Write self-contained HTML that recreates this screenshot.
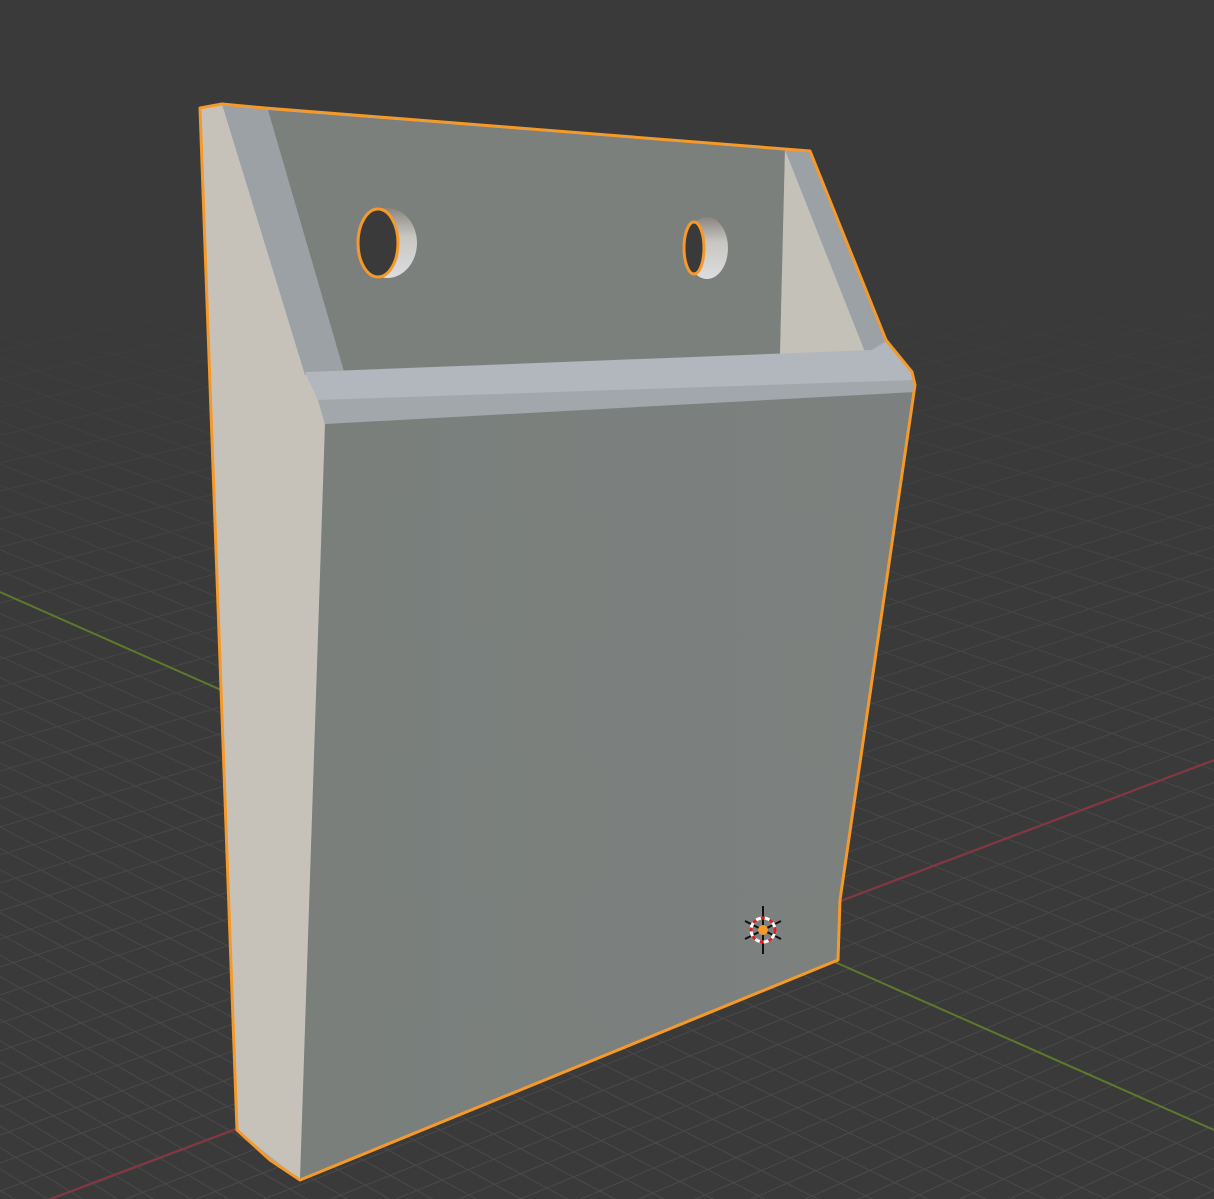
<!DOCTYPE html>
<html><head><meta charset="utf-8"><style>
html,body{margin:0;padding:0;background:#3a3a3a;width:1214px;height:1199px;overflow:hidden}
svg{display:block;position:absolute;left:0;top:0}
</style></head><body>
<svg id="s" width="1214" height="1199" viewBox="0 0 1214 1199" xmlns="http://www.w3.org/2000/svg">
<defs>
<linearGradient id="fade" x1="0" y1="0" x2="0" y2="1">
<stop offset="0" stop-color="#3a3a3a" stop-opacity="1"/>
<stop offset="0.22" stop-color="#3a3a3a" stop-opacity="1"/>
<stop offset="0.5" stop-color="#3a3a3a" stop-opacity="0.3"/>
<stop offset="1" stop-color="#3a3a3a" stop-opacity="0"/>
</linearGradient>
<linearGradient id="front" x1="0" y1="0" x2="1" y2="0">
<stop offset="0" stop-color="#7a7f7c"/><stop offset="1" stop-color="#7c817f"/>
</linearGradient>
<linearGradient id="hole" x1="0" y1="0" x2="0" y2="1">
<stop offset="0" stop-color="#8a8580"/><stop offset="0.4" stop-color="#c8c6c2"/><stop offset="1" stop-color="#dcdde0"/>
</linearGradient>
</defs>
<rect width="1214" height="1199" fill="#3a3a3a"/>
<g id="grid" stroke="#4a4a4a" stroke-width="1"></g>
<rect width="1214" height="1199" fill="url(#fade)"/>
<line x1="0" y1="592" x2="1214" y2="1130" stroke="#5d7a2a" stroke-width="2"/>
<line x1="50" y1="1199" x2="1214" y2="760" stroke="#8a3440" stroke-width="2"/>

<!-- object -->
<polygon points="200,108 222,104 265,108 810,151 886,340 912,372 915,385 840,900 838,960 300,1180 270,1160 237,1130" fill="#a6abb1"/>
<polygon points="200,108 222,104 305,372 318,400 325,424 300,1180 237,1130" fill="#c6c2ba"/>
<polygon points="222,104 268,110 345,375 305,375" fill="#9ca1a6"/>
<polygon points="268,110 785,150 780,355 345,375" fill="#7b807d"/>
<polygon points="785,150 810,152 865,352 780,355" fill="#c4c1b9"/>
<polygon points="810,152 886,340 872,350 865,352 785,150" fill="#9ca1a6"/>
<polygon points="305,372 872,350 886,342 912,372 915,385 325,410 318,400" fill="#b2b6bd"/>
<polygon points="318,400 915,380 915,392 325,425" fill="#a2a7ab"/>
<polygon points="325,424 915,392 840,900 838,960 300,1180" fill="url(#front)"/>
<polygon points="200,108 222,104 265,108 810,151 886,340 912,372 915,385 840,900 838,960 300,1180 270,1160 237,1130" fill="none" stroke="#f59a2a" stroke-width="3" stroke-linejoin="round"/>
<!-- holes -->
<ellipse cx="387" cy="243" rx="30" ry="35" fill="url(#hole)"/>
<ellipse cx="378" cy="243" rx="20" ry="34" fill="#3a3a3a" stroke="#f59a2a" stroke-width="3"/>
<ellipse cx="707" cy="248" rx="21" ry="31" fill="url(#hole)"/>
<ellipse cx="694" cy="248" rx="10" ry="26" fill="#3a3a3a" stroke="#f59a2a" stroke-width="3"/>
<!-- 3d cursor -->
<g stroke="#111" stroke-width="2">
<line x1="763" y1="906" x2="763" y2="954"/>
<line x1="745" y1="921" x2="781" y2="939"/>
<line x1="745" y1="939" x2="781" y2="921"/>
</g>
<circle cx="763" cy="930" r="12" fill="none" stroke="#fff" stroke-width="3"/>
<circle cx="763" cy="930" r="12" fill="none" stroke="#e02020" stroke-width="3" stroke-dasharray="4 5"/>
<circle cx="763" cy="930" r="5" fill="#f59a2a"/>
</svg>
<script>
(function(){
var g=document.getElementById('grid'),ns='http://www.w3.org/2000/svg';
function L(x1,y1,x2,y2){var l=document.createElementNS(ns,'line');l.setAttribute('x1',x1);l.setAttribute('y1',y1);l.setAttribute('x2',x2);l.setAttribute('y2',y2);g.appendChild(l);}
var vg=[-3000,-737],vr=[5185,-737];
for(var i=-60;i<200;i++){var y=1130+i*30;L(vg[0],vg[1],1214,y);}
for(var j=-60;j<200;j++){var y2=1219+j*28;L(vr[0],vr[1],0,y2);}
})();
</script>
</body></html>
